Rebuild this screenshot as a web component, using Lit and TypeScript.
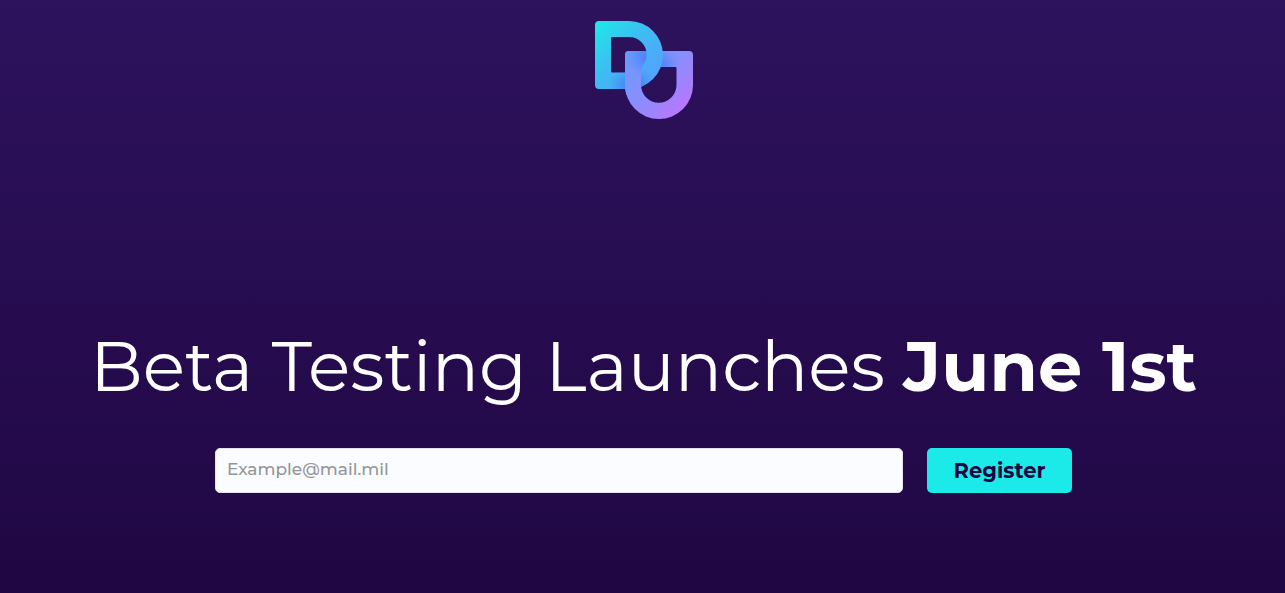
import { LitElement, html, css } from "lit";
import { customElement, state } from "lit/decorators.js";

@customElement("du-logo")
export class DuLogo extends LitElement {
  static styles = css`
    :host {
      display: block;
    }
    .mark {
      display: block;
      width: 98px;
      height: 98px;
    }
  `;

  render() {
    return html`
      <svg class="mark" viewBox="0 0 98 98" role="img" aria-label="DU">
        <defs>
          <linearGradient id="d-fill" gradientUnits="userSpaceOnUse" x1="0" y1="2" x2="56" y2="54">
            <stop offset="0" stop-color="#1ceae6" />
            <stop offset="0.5" stop-color="#3dbef2" />
            <stop offset="1" stop-color="#52a4fc" />
          </linearGradient>
          <linearGradient id="u-fill" gradientUnits="userSpaceOnUse" x1="34" y1="36" x2="88" y2="90">
            <stop offset="0" stop-color="#6a9bfc" />
            <stop offset="0.5" stop-color="#8b8dfd" />
            <stop offset="1" stop-color="#b877fd" />
          </linearGradient>
          <radialGradient id="shade">
            <stop offset="0" stop-color="#3c7cf0" stop-opacity="0.75" />
            <stop offset="0.4" stop-color="#4283f3" stop-opacity="0.5" />
            <stop offset="1" stop-color="#4a8df8" stop-opacity="0" />
          </radialGradient>
          <path
            id="d-shape"
            clip-rule="evenodd"
            fill-rule="evenodd"
            d="M4 0H34A34 34 0 0 1 34 68H4A4 4 0 0 1 0 64V4A4 4 0 0 1 4 0ZM17 16A1 1 0 0 0 16 17V50.500A1 1 0 0 0 17 51.500H34A17.750 17.750 0 0 0 34 16Z"
          />
          <path
            id="u-shape"
            fill-rule="evenodd"
            d="M34 30H94A4 4 0 0 1 98 34V64A34 34 0 0 1 30 64V34A4 4 0 0 1 34 30ZM47 46A1 1 0 0 0 46 47V64A17.750 17.750 0 0 0 81.500 64V47A1 1 0 0 0 80.500 46Z"
          />
          <clipPath id="d-clip"><use href="#d-shape" /></clipPath>
          <clipPath id="u-bar"><path d="M34 30H94V46H46V64H30V34A4 4 0 0 1 34 30Z" /></clipPath>
          <clipPath id="u-stem"><rect x="29" y="29" width="17" height="45" /></clipPath>
          <g id="u-shaded">
            <use href="#u-shape" fill="url(#u-fill)" />
            <g clip-path="url(#u-bar)">
              <ellipse cx="51" cy="36" rx="20" ry="20" fill="url(#shade)" />
              <ellipse cx="65" cy="44" rx="20" ry="18" fill="url(#shade)" />
            </g>
          </g>
        </defs>
        <use href="#u-shaded" />
        <use href="#d-shape" fill="url(#d-fill)" />
        <g clip-path="url(#d-clip)">
          <ellipse cx="32" cy="64" rx="19" ry="18" fill="url(#shade)" />
          <ellipse cx="44" cy="64" rx="15" ry="18" fill="url(#shade)" />
        </g>
        <use href="#u-shaded" clip-path="url(#u-stem)" />
      </svg>
    `;
  }
}

@customElement("app-root")
export class AppRoot extends LitElement {
  static styles = css`
    :host {
      display: block;
      font-family: Montserrat, Inter, "Open Sans", sans-serif;
      color: #ffffff;
    }
    .page {
      box-sizing: border-box;
      min-height: 100vh;
      padding: 21px 24px 100px 26px;
      display: flex;
      flex-direction: column;
      align-items: center;
      justify-content: space-between;
      background: linear-gradient(#2d125d, #200743);
    }
    .launch {
      width: 100%;
      display: flex;
      flex-direction: column;
      align-items: center;
      gap: 38px;
    }
    .title {
      margin: 0;
      font-size: 70px;
      line-height: 88px;
      font-weight: 400;
      text-align: center;
    }
    .date {
      font-weight: 700;
    }
    .form {
      width: 69.4%;
      display: flex;
      gap: 24px;
    }
    .email {
      box-sizing: border-box;
      flex: 1;
      min-width: 0;
      height: 45px;
      padding: 0 11px 4px;
      border: 1px solid #e2e3ee;
      border-radius: 5px;
      background: #fafcff;
      color: #1f0641;
      font: 500 17px/24px Montserrat, Inter, sans-serif;
    }
    .email::placeholder {
      color: #949698;
      opacity: 1;
    }
    .register {
      box-sizing: border-box;
      width: 145px;
      height: 45px;
      padding: 0;
      border: 0;
      border-radius: 5px;
      background: #1ceae8;
      color: #1c0742;
      font: 700 21px/28px Montserrat, Inter, sans-serif;
      cursor: pointer;
    }
  `;

  @state() private email = "";

  private onInput(event: Event) {
    this.email = (event.target as HTMLInputElement).value;
  }

  private onSubmit(event: Event) {
    event.preventDefault();
  }

  render() {
    return html`
      <main class="page">
        <du-logo></du-logo>
        <section class="launch">
          <h1 class="title">Beta Testing Launches <strong class="date">June 1st</strong></h1>
          <form class="form" @submit=${this.onSubmit}>
            <input
              class="email"
              type="email"
              aria-label="Email address"
              placeholder="Example@mail.mil"
              .value=${this.email}
              @input=${this.onInput}
            />
            <button class="register" type="submit">Register</button>
          </form>
        </section>
      </main>
    `;
  }
}
